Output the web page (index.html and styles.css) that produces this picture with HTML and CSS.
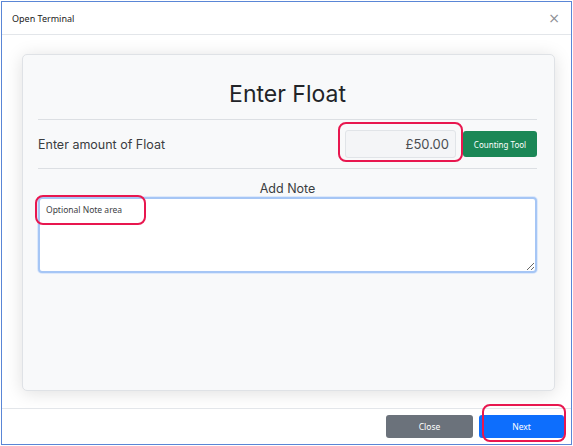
FILE: index.html
```html
<!DOCTYPE html>
<html lang="en">
  <head>
    <meta charset="utf-8" />
    <title>Open Terminal</title>
    <link rel="stylesheet" href="styles.css">
  </head>
  <body>
    <div class="modal">
      <div class="modal-header">
        <span class="modal-title">Open Terminal</span>
        <span class="close-x">&times;</span>
      </div>
      <div class="modal-body">
        <div class="card">
          <h1>Enter Float</h1>
          <hr />
          <div class="float-row">
            <span class="label">Enter amount of Float</span>
            <div class="float-controls">
              <div class="marked marked-input">
                <input class="amount" value="£50.00" />
              </div>
              <button class="btn btn-green">Counting Tool</button>
            </div>
          </div>
          <hr />
          <div class="note-label">Add Note</div>
          <div class="note-wrap">
            <textarea class="note">Optional Note area</textarea>
            <span class="mark mark-note"></span>
          </div>
        </div>
      </div>
      <div class="modal-footer">
        <button class="btn btn-grey">Close</button>
        <div class="marked marked-next">
          <button class="btn btn-blue">Next</button>
        </div>
      </div>
    </div>
  </body>
</html>
```

FILE: styles.css
```css
html,
body {
  margin: 0px;
  padding: 0px;
  background: #ffffff;
}
.modal {
  box-sizing: border-box;
  width: 571px;
  height: 444px;
  margin: 1px 0px 0px 1px;
  border: 1px solid #5a86d6;
  display: flex;
  flex-direction: column;
  font-family: Inter, "Noto Sans", sans-serif;
  color: #212529;
}
.modal-header {
  height: 32px;
  border-bottom: 1px solid #e3e6ea;
  display: flex;
  align-items: center;
  justify-content: space-between;
  padding: 0px 11px 0px 10px;
  flex-shrink: 0;
}
.modal-title {
  font-family: "Noto Sans", sans-serif;
  font-size: 9px;
  color: #222222;
}
.close-x {
  font-family: "DejaVu Sans", sans-serif;
  font-size: 14px;
  color: #8a8e94;
}
.modal-body {
  flex: 1;
  padding: 19px 16px 17px 20px;
  display: flex;
  background: #ffffff;
}
.card {
  flex: 1;
  background: #f8f9fa;
  border: 1px solid #dfe2e6;
  border-radius: 5px;
  box-shadow: 0px 2px 18px rgba(0, 0, 0, 0.13);
  padding: 0px 17px 0px 15px;
}
h1 {
  margin: 24px 0px 10px 0px;
  font-size: 23px;
  font-weight: 400;
  text-align: center;
  line-height: 30px;
  color: #222428;
}
hr {
  border: none;
  border-top: 1px solid #dcdfe3;
  margin: 0px;
}
.float-row {
  display: flex;
  align-items: center;
  justify-content: space-between;
  height: 48px;
}
.label {
  font-size: 12.5px;
  color: #3a3d41;
}
.float-controls {
  display: flex;
  align-items: center;
  gap: 7px;
}
.marked {
  position: relative;
}
.marked::after {
  content: "";
  position: absolute;
  border: 2px solid #e8174f;
  border-radius: 8px;
  pointer-events: none;
}
.marked-input::after {
  left: -7px;
  top: -8px;
  right: -7px;
  bottom: -4px;
}
.amount {
  box-sizing: border-box;
  width: 111px;
  height: 28px;
  border: 1px solid #e1e4e8;
  border-radius: 3px;
  background: #f4f5f7;
  text-align: right;
  padding: 0px 6px;
  font-family: Inter, sans-serif;
  font-size: 13px;
  color: #4a4d51;
}
.btn {
  border: none;
  border-radius: 3px;
  color: #ffffff;
  font-family: "Noto Sans", sans-serif;
  cursor: pointer;
}
.btn-green {
  width: 74px;
  height: 26px;
  background: #1b8756;
  font-size: 8px;
}
.note-label {
  text-align: center;
  font-size: 12.5px;
  color: #3a3d41;
  margin-top: 12px;
  line-height: 16px;
}
.note-wrap {
  position: relative;
}
.note {
  box-sizing: border-box;
  display: block;
  width: 100%;
  height: 76px;
  border: 2px solid #a6c6f5;
  border-radius: 4px;
  box-shadow: 0px 0px 0px 1px #dde9fb;
  background: #ffffff;
  resize: vertical;
  padding: 5px 6px;
  font-family: "Noto Sans", sans-serif;
  font-size: 8.5px;
  color: #3d4044;
  outline: none;
}
.mark-note {
  position: absolute;
  left: -3px;
  top: -2px;
  width: 111px;
  height: 30px;
  box-sizing: border-box;
  border: 2px solid #e8174f;
  border-radius: 8px;
}
.modal-footer {
  flex-shrink: 0;
  height: 35px;
  border-top: 1px solid #e3e6ea;
  display: flex;
  justify-content: flex-end;
  align-items: center;
  gap: 6px;
  padding-right: 7px;
}
.btn-grey {
  width: 87px;
  height: 23px;
  background: #6b727b;
  font-size: 8.5px;
}
.btn-blue {
  width: 85px;
  height: 23px;
  background: #0d6efd;
  font-size: 8.5px;
  display: block;
}
.marked-next::after {
  left: 3px;
  top: -11px;
  right: -2px;
  bottom: -4px;
}
```
